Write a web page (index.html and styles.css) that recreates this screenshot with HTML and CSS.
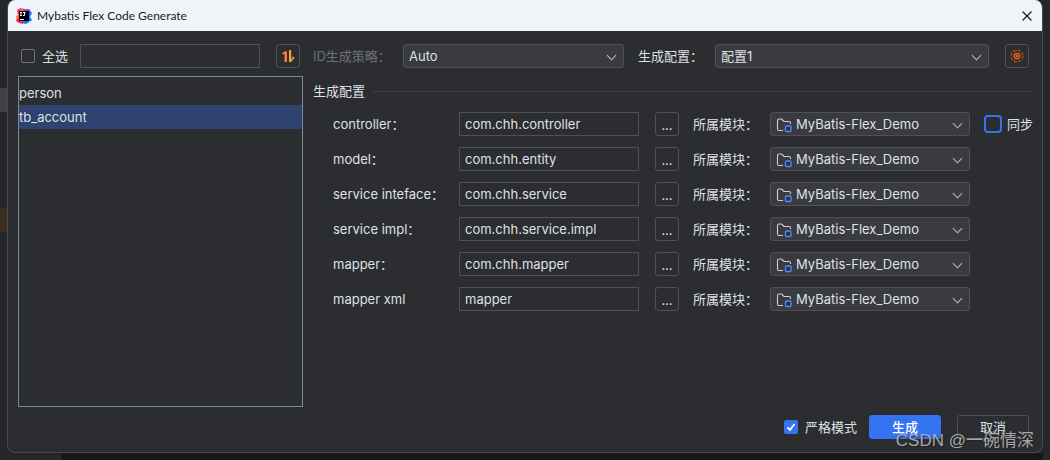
FILE: index.html
```
<!DOCTYPE html>
<html lang="zh-CN">
<head>
<meta charset="utf-8">
<title>Mybatis Flex Code Generate</title>
<link rel="stylesheet" href="styles.css">
</head>
<body>
<svg class="defs" aria-hidden="true">
  <symbol id="module" viewBox="0 0 16 16">
    <path d="M7 13.500H3Q1.500 13.500 1.500 12V3.500Q1.500 2 3 2H5.600L8 4.500H13Q14.500 4.500 14.500 6V7" fill="none" stroke="#ced0d6" stroke-width="1.100"/>
    <rect x="9.500" y="9" width="5.500" height="5.500" rx="1" fill="#25324d" stroke="#548af7" stroke-width="1.300"/>
  </symbol>
</svg>
<div class="dialog">
  <header class="titlebar">
    <svg class="logo" viewBox="0 0 16 16" aria-hidden="true">
      <path d="M1 2L5 0L9 1L7 8L1 13L0 8L2 7Z" fill="#fc801d"/>
      <path d="M1 2L5 0L6 5L2 7Z" fill="#ff318c"/>
      <path d="M7 1L13 1L16 5L14 9L16 12L10 16L5 15L9 8Z" fill="#087cfa"/>
      <path d="M8 1L13 1L15 4L10 5Z" fill="#a83af5"/>
      <path d="M0 12L3 9L8 14L6 16L1 14Z" fill="#fe2857"/>
      <rect x="3" y="3" width="10" height="10" fill="#000"/>
      <path d="M4 4.500H6M5 4.500V7.500M4 7.500H6M7 4.500H9.500M8.500 4.500V7.500H7M4 11.500H8" stroke="#fff" fill="none"/>
    </svg>
    <h1 class="title">Mybatis Flex Code Generate</h1>
    <button class="close" type="button" aria-label="关闭">
      <svg viewBox="0 0 10 10" aria-hidden="true"><path d="M0.500 0.500L9.500 9.500M9.500 0.500L0.500 9.500" stroke="#1b1b1b" stroke-width="1.200"/></svg>
    </button>
  </header>
  <main class="content">
    <section class="tables">
      <div class="toolbar table-tools">
        <label class="check"><input class="box" type="checkbox">全选</label>
        <input class="field search" type="text" aria-label="搜索">
        <button class="icon-button" type="button" aria-label="排序">
          <svg viewBox="0 0 16 16" aria-hidden="true">
            <path d="M2 6L3 4.500L5 3.200H7V14H4.500V6.500Z" fill="#fa7642"/>
            <path d="M9 2H11.200V9.500L13.500 8.500L14.500 10L11 14H9Z" fill="#f6a038"/>
            <path d="M11.200 9.500V11.500L13 9.500Z" fill="#2b2d30"/>
          </svg>
        </button>
      </div>
      <ul class="list">
        <li class="item">person</li>
        <li class="item selected">tb_account</li>
      </ul>
    </section>
    <section class="settings">
      <div class="toolbar config-tools">
        <label class="muted" for="strategy">ID生成策略：</label>
        <span class="combo"><select id="strategy"><option>Auto</option></select></span>
        <label for="config">生成配置：</label>
        <span class="combo"><select id="config"><option>配置1</option></select></span>
        <button class="icon-button" type="button" aria-label="设置">
          <svg viewBox="0 0 16 16" aria-hidden="true">
            <circle cx="8" cy="8" r="5.900" fill="none" stroke="#9a4a17" stroke-width="1.600" stroke-dasharray="3 1.630"/>
            <circle cx="8" cy="8" r="5.200" fill="none" stroke="#7c3d18" stroke-width="0.800"/>
            <circle cx="8" cy="8" r="2.700" fill="none" stroke="#f26512" stroke-width="1.300"/>
            <circle cx="8" cy="8" r="1.200" fill="#ff6a0a"/>
          </svg>
        </button>
      </div>
      <h2 class="group-title">生成配置</h2>
      <div class="rows">
        <div class="row">
          <label for="p1">controller：</label><input class="field" id="p1" type="text" value="com.chh.controller">
          <button class="icon-button browse" type="button" aria-label="选择">...</button>
          <label for="m1">所属模块：</label>
          <span class="combo with-icon"><svg class="module" aria-hidden="true"><use href="#module"/></svg><select id="m1"><option>MyBatis-Flex_Demo</option></select></span>
          <label class="check sync"><input class="box focused" type="checkbox">同步</label>
        </div>
        <div class="row">
          <label for="p2">model：</label><input class="field" id="p2" type="text" value="com.chh.entity">
          <button class="icon-button browse" type="button" aria-label="选择">...</button>
          <label for="m2">所属模块：</label>
          <span class="combo with-icon"><svg class="module" aria-hidden="true"><use href="#module"/></svg><select id="m2"><option>MyBatis-Flex_Demo</option></select></span>
        </div>
        <div class="row">
          <label for="p3">service inteface：</label><input class="field" id="p3" type="text" value="com.chh.service">
          <button class="icon-button browse" type="button" aria-label="选择">...</button>
          <label for="m3">所属模块：</label>
          <span class="combo with-icon"><svg class="module" aria-hidden="true"><use href="#module"/></svg><select id="m3"><option>MyBatis-Flex_Demo</option></select></span>
        </div>
        <div class="row">
          <label for="p4">service impl：</label><input class="field" id="p4" type="text" value="com.chh.service.impl">
          <button class="icon-button browse" type="button" aria-label="选择">...</button>
          <label for="m4">所属模块：</label>
          <span class="combo with-icon"><svg class="module" aria-hidden="true"><use href="#module"/></svg><select id="m4"><option>MyBatis-Flex_Demo</option></select></span>
        </div>
        <div class="row">
          <label for="p5">mapper：</label><input class="field" id="p5" type="text" value="com.chh.mapper">
          <button class="icon-button browse" type="button" aria-label="选择">...</button>
          <label for="m5">所属模块：</label>
          <span class="combo with-icon"><svg class="module" aria-hidden="true"><use href="#module"/></svg><select id="m5"><option>MyBatis-Flex_Demo</option></select></span>
        </div>
        <div class="row">
          <label for="p6">mapper xml</label><input class="field" id="p6" type="text" value="mapper">
          <button class="icon-button browse" type="button" aria-label="选择">...</button>
          <label for="m6">所属模块：</label>
          <span class="combo with-icon"><svg class="module" aria-hidden="true"><use href="#module"/></svg><select id="m6"><option>MyBatis-Flex_Demo</option></select></span>
        </div>
      </div>
    </section>
  </main>
  <footer class="footer">
    <label class="check"><input class="box" type="checkbox" checked>严格模式</label>
    <button class="action primary" type="button">生成</button>
    <button class="action" type="button">取消</button>
  </footer>
</div>
<div class="watermark">CSDN @一碗情深</div>
</body>
</html>
```
FILE: styles.css
```
* {
  box-sizing: border-box;
}

body {
  display: flex;
  flex-direction: column;
  min-height: 100vh;
  margin: 0;
  padding: 0 7px 7px;
  color: #dfe1e5;
  font: 13px/20px Inter, "Noto Sans CJK SC", sans-serif;
  background:
    linear-gradient(#404246, #404246) 0 88px / 7px 24px no-repeat,
    linear-gradient(#392e20, #392e20) 0 208px / 7px 24px no-repeat,
    linear-gradient(90deg, #252629 61px, #161719 61px) 0 100% / calc(100% - 7px) 7px no-repeat,
    #252629;
}

.defs {
  position: absolute;
  width: 0;
  height: 0;
}

input,
select,
button {
  margin: 0;
  color: inherit;
  font: inherit;
}

.dialog {
  display: flex;
  flex: 1;
  flex-direction: column;
  overflow: hidden;
  border: 1px solid #47494c;
  border-top: 0;
  border-radius: 8px;
  background: #2b2d30;
}

.titlebar {
  display: flex;
  align-items: center;
  height: 31px;
  padding: 0 10px 0 8px;
  color: #1b1b1b;
  background: #eff4f9;
}

.logo {
  width: 16px;
  height: 16px;
}

.title {
  flex: 1;
  margin: 0 0 0 5px;
  font: 12px/20px Lato, "Open Sans", sans-serif;
}

.close {
  display: flex;
  padding: 0;
  border: 0;
  background: none;
}

.close svg {
  width: 10px;
  height: 10px;
}

.content {
  display: grid;
  flex: 1;
  grid-template-columns: 285px 1fr;
  gap: 10px;
  padding: 13px 10px 8px;
}

.tables,
.settings {
  display: flex;
  flex-direction: column;
}

.toolbar {
  display: grid;
  align-items: center;
  height: 24px;
}

.table-tools {
  grid-template-columns: 43px 180px 24px;
  column-gap: 16px;
  padding: 0 3px;
}

.config-tools {
  grid-template-columns: 76px 221fr 63px 274fr 26px;
  column-gap: 14px;
  padding-right: 3px;
}

.config-tools .icon-button {
  justify-self: end;
}

.muted {
  color: #6f737a;
}

label {
  white-space: nowrap;
}

.check {
  display: flex;
  align-items: center;
  gap: 7px;
}

.box {
  flex: none;
  width: 14px;
  height: 14px;
  appearance: none;
  border: 1px solid #6f7379;
  border-radius: 2px;
}

.box:checked {
  border-color: #3574f0;
  background: #3574f0 url("data:image/svg+xml,%3Csvg xmlns='http://www.w3.org/2000/svg' viewBox='0 0 12 12'%3E%3Cpath d='M2.500 6.500L5 9L9.500 3' fill='none' stroke='white' stroke-width='1.800'/%3E%3C/svg%3E") center / 12px 12px;
}

.box.focused {
  width: 18px;
  height: 18px;
  border: 2px solid #3574f0;
  border-radius: 4px;
}

.field {
  width: 100%;
  min-width: 0;
  height: 24px;
  padding: 0 5px;
  border: 1px solid #4e5157;
  border-radius: 0;
  background: transparent;
}

.icon-button {
  display: flex;
  align-items: center;
  justify-content: center;
  width: 24px;
  height: 24px;
  padding: 0;
  border: 1px solid #4e5157;
  border-radius: 3px;
  background: transparent;
}

.icon-button svg {
  width: 16px;
  height: 16px;
}

.browse {
  padding-top: 2px;
}

.combo {
  position: relative;
  display: flex;
  min-width: 0;
}

.combo::after {
  position: absolute;
  top: 8px;
  right: 9px;
  width: 6px;
  height: 6px;
  border: solid #b4b8bf;
  border-width: 0 1px 1px 0;
  content: "";
  pointer-events: none;
  transform: rotate(45deg);
}

.combo select {
  width: 100%;
  height: 24px;
  padding: 0 24px 0 5px;
  appearance: none;
  border: 1px solid #4e5157;
  border-radius: 3px;
  background: #393b40;
}

.with-icon select {
  padding-left: 25px;
}

.module {
  position: absolute;
  top: 5px;
  left: 6px;
  width: 16px;
  height: 16px;
  pointer-events: none;
}

.list {
  flex: 1;
  margin: 8px 0 0;
  padding: 4px 0;
  border: 1px solid #7a8a9a;
  list-style: none;
}

.item {
  height: 24px;
  line-height: 24px;
}

.selected {
  background: #2e436e;
}

.group-title {
  display: flex;
  align-items: center;
  gap: 7px;
  margin: 13px 0 11px;
  font-size: 13px;
  font-weight: 400;
  line-height: 20px;
}

.group-title::after {
  flex: 1;
  height: 1px;
  background: #3b3d41;
  content: "";
}

.rows {
  display: grid;
  gap: 11px;
  padding-left: 20px;
}

.row {
  display: grid;
  grid-template-columns: 110px 180fr 24px 59px 200fr 46px;
  align-items: center;
  column-gap: 16px;
}

.row .browse + label {
  margin-left: -2px;
}

.row .sync {
  gap: 5px;
  margin-left: -2px;
}

.footer {
  display: flex;
  align-items: center;
  justify-content: flex-end;
  gap: 16px;
  padding: 0 13px 13px;
}

.footer .check {
  margin-right: -4px;
}

.action {
  width: 72px;
  height: 24px;
  padding: 0;
  border: 1px solid #4e5157;
  border-radius: 3px;
  background: transparent;
}

.primary {
  border-color: #3574f0;
  color: #fff;
  font-weight: 500;
  background: #3574f0;
}

.watermark {
  position: absolute;
  right: 16px;
  bottom: 7px;
  color: #b5b6b8;
  font: 17px/24px "Liberation Sans", "Noto Sans CJK SC", sans-serif;
  text-shadow: 1px 1px 1px #222;
  opacity: 0.9;
  pointer-events: none;
}
```
